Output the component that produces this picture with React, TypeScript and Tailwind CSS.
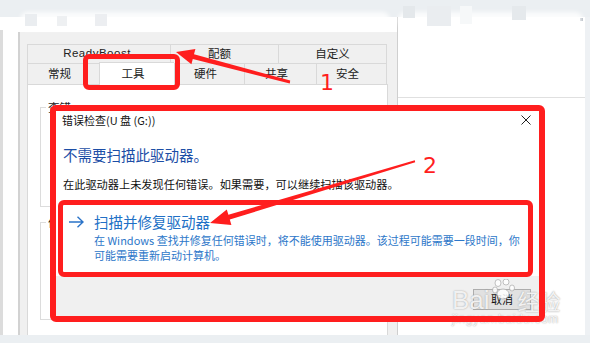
import React from "react";

const font = "font-['Noto_Sans_CJK_SC','Noto_Sans',sans-serif]";

function Tab({ label, w, selected, last }: { label: string; w: string; selected?: boolean; last?: boolean }) {
  return (
    <div
      className={`${w} flex items-center justify-center pr-[8px] border-l border-t border-[#d9d9d9] ${last ? "border-r" : ""} ${
        selected ? "bg-white relative z-10 -mt-[2px] -mb-[1px] h-[23px]" : "h-[21px]"
      } text-[11.5px] text-[#222]`}
    >
      {label}
    </div>
  );
}

export default function App() {
  return (
    <div className={`relative w-[590px] h-[343px] overflow-hidden bg-[#ebeff2] ${font}`}>
      {/* top band */}
      <div className="h-[17px]" />
      <div className="flex h-[318px]">
        <div className="w-[18px] bg-white flex">
          <div className="w-[3px] mt-[13px] bg-[#dcdcdc]" />
        </div>
        {/* property sheet */}
        <div className="w-[379px] flex flex-col">
          <div className="h-[15px] bg-white" />
          <div className="flex-1 bg-[#f0f0f0] border-l-2 border-[#d2d2d2] pl-[7px] pt-[12px] flex flex-col">
            <div className="w-[360px] flex h-[19px]">
              <div className="w-[143px] flex items-center justify-center pr-[4px] border-l border-t border-[#d9d9d9] text-[11.5px] text-[#222] tracking-[0.5px] font-['Liberation_Sans',sans-serif]">
                ReadyBoost
              </div>
              <div className="w-[108px] flex items-center justify-center pr-[10px] border-l border-t border-[#d9d9d9] text-[11.5px] text-[#222]">
                配额
              </div>
              <div className="w-[109px] flex items-center justify-center border-l border-t border-r border-[#d9d9d9] text-[11.5px] text-[#222]">
                自定义
              </div>
            </div>
            <div className="w-[360px] flex items-end">
              <Tab label="常规" w="w-[72px]" />
              <Tab label="工具" w="w-[75px]" selected />
              <Tab label="硬件" w="w-[70px]" />
              <Tab label="共享" w="w-[72px]" />
              <Tab label="安全" w="w-[71px]" last />
            </div>
            <div className="w-[361px] flex-1 bg-white border-l border-t border-r border-[#d9d9d9] pl-[12px] pt-[22px] flex flex-col gap-[15px]">
              <div className="relative w-[336px] h-[100px] border border-[#dcdcdc]">
                <span className="absolute -top-[9px] left-[5px] bg-white px-[2px] text-[11.5px] text-[#222] leading-[16px]">查错</span>
              </div>
              <div className="relative w-[336px] h-[98px] border border-[#dcdcdc]">
                <span className="absolute -top-[9px] left-[5px] bg-white px-[2px] text-[11.5px] text-[#222] leading-[16px]">优化</span>
              </div>
            </div>
          </div>
        </div>
        {/* right panel */}
        <div className="w-[188px] bg-white border-l border-[#cfcfcf] relative">
          <div className="mt-[80px] border-t border-[#e0e0e0]" />
          <div className="absolute right-[2px] top-[1px] w-[3px] h-[3px] bg-[#9aa3ad]" />
        </div>
        <div className="w-[5px] bg-[#eef1f4]" />
      </div>

      {/* blurred mosaic near top */}
      <div className="absolute left-[20px] top-[12px] w-[370px] h-[18px] rounded-[8px] bg-white/80 blur-[2px]" />
      <div className="absolute left-[398px] top-[12px] w-[185px] h-[16px] rounded-[8px] bg-white/80 blur-[2px]" />
      <div className="absolute left-[25px] top-[14px] w-[12px] h-[12px] bg-[#eaedf0]" />
      <div className="absolute left-[57px] top-[16px] w-[10px] h-[10px] bg-[#eef0f2]" />
      <div className="absolute left-[95px] top-[14px] w-[12px] h-[12px] bg-[#eceef1]" />
      <div className="absolute left-[403px] top-[6px] w-[12px] h-[12px] bg-[#e4e8eb]" />
      <div className="absolute left-[427px] top-[6px] w-[24px] h-[20px] bg-[#eaedf0]" />
      <div className="absolute left-[512px] top-[6px] w-[14px] h-[14px] bg-[#e5e9ec]" />
      <div className="absolute left-[460px] top-[6px] w-[12px] h-[18px] bg-[#f6f8f9]" />

      {/* error check dialog */}
      <div className="absolute left-[55px] top-[107px] w-[486px] h-[211px] bg-white border border-[#8a8a8a] flex flex-col">
        <div className="h-[24px] flex items-center justify-between pl-[6px] pr-[9px]">
          <span className="text-[11px] text-[#111]">错误检查(U 盘 (G:))</span>
          <svg width="10" height="10" viewBox="0 0 10 10">
            <path d="M0.5 0.5 L9.5 9.5 M9.5 0.5 L0.5 9.5" stroke="#222" strokeWidth="1" />
          </svg>
        </div>
        <div className="pl-[7px] mt-[13px] text-[14.5px] leading-[20px] text-[#1c4ea6]">不需要扫描此驱动器。</div>
        <div className="pl-[7px] mt-[11px] text-[11.2px] leading-[16px] text-[#111]">
          在此驱动器上未发现任何错误。如果需要，可以继续扫描该驱动器。
        </div>
        <div className="pl-[12px] mt-[20px] flex items-center gap-[10px] h-[20px]">
          <svg width="16" height="12" viewBox="0 0 16 12">
            <path d="M1 6 H15 M9.5 0.8 L15 6 L9.5 11.2" stroke="#2a73c8" strokeWidth="1.4" fill="none" />
          </svg>
          <span className="text-[14.5px] leading-[20px] text-[#2170c6]">扫描并修复驱动器</span>
        </div>
        <div className="pl-[38px] mt-[1px] text-[11px] leading-[15px] text-[#2d77c9]">
          <div>在 Windows 查找并修复任何错误时，将不能使用驱动器。该过程可能需要一段时间，你</div>
          <div>可能需要重新启动计算机。</div>
        </div>
        <div className="mt-auto h-[41px] bg-[#f0f0f0] flex justify-end items-start pt-[13px] pr-[9px]">
          <div className="w-[58px] h-[21px] border border-[#adadad] bg-[#e1e1e1] flex items-center justify-center text-[11px] text-[#111]">
            取消
          </div>
        </div>
      </div>

      {/* watermark */}
      <div className="absolute left-[452px] top-[290px] flex items-end text-white/85 [text-shadow:0_0_1.5px_#8f8f8f]">
        <span className="text-[26px] leading-[20px] font-['Liberation_Sans',sans-serif]">Bai</span>
        <span className="leading-[20px] ml-[28px] text-[22px] font-['Noto_Sans_CJK_SC',sans-serif] tracking-[-1px]">经验</span>
      </div>
      <svg className="absolute left-[492px] top-[279px]" width="26" height="22" viewBox="0 0 26 22">
        <g fill="white" fillOpacity="0.85" stroke="#9a9a9a" strokeWidth="0.6">
          <ellipse cx="6" cy="4" rx="3" ry="3.5" />
          <ellipse cx="14" cy="3" rx="3" ry="3" />
          <ellipse cx="3" cy="11" rx="2.5" ry="3" />
          <ellipse cx="20" cy="9" rx="2.5" ry="3" />
          <ellipse cx="11" cy="15" rx="6" ry="5" />
        </g>
      </svg>
      <div className="absolute left-[452px] top-[313px] text-[12px] leading-[13px] text-white/85 tracking-[0.6px] font-['Liberation_Sans',sans-serif] [text-shadow:0_0_1.5px_#8f8f8f]">
        jingyan.baidu.com
      </div>

      {/* red annotations */}
      <div className="absolute left-[83px] top-[54px] w-[97px] h-[36px] border-[5px] border-[#ff1e1e] rounded-[6px]" />
      <div className="absolute left-[50px] top-[105px] w-[495px] h-[217px] border-[6px] border-[#ff1e1e] rounded-[6px]" />
      <div className="absolute left-[58px] top-[200px] w-[475px] h-[77px] border-[5px] border-[#ff1e1e] rounded-[6px]" />
      <svg className="absolute left-0 top-0" width="590" height="343" viewBox="0 0 590 343">
        <polygon
          fill="#ff1e1e"
          points="176,52 195.4,48.9 194,54.2 290.2,80.6 289.8,83.4 192.8,59 191.4,64.3"
        />
        <polygon
          fill="#ff1e1e"
          points="210,223 226.8,209.5 228.4,214.8 414.8,160.2 415.2,162.2 229.8,219.6 231.4,224.9"
        />
      </svg>
      <span className="absolute left-[320px] top-[71px] text-[22px] leading-[24px] text-[#ff1e1e] font-['DejaVu_Sans',sans-serif]">1</span>
      <span className="absolute left-[423px] top-[154px] text-[22px] leading-[24px] text-[#ff1e1e] font-['DejaVu_Sans',sans-serif]">2</span>
    </div>
  );
}
